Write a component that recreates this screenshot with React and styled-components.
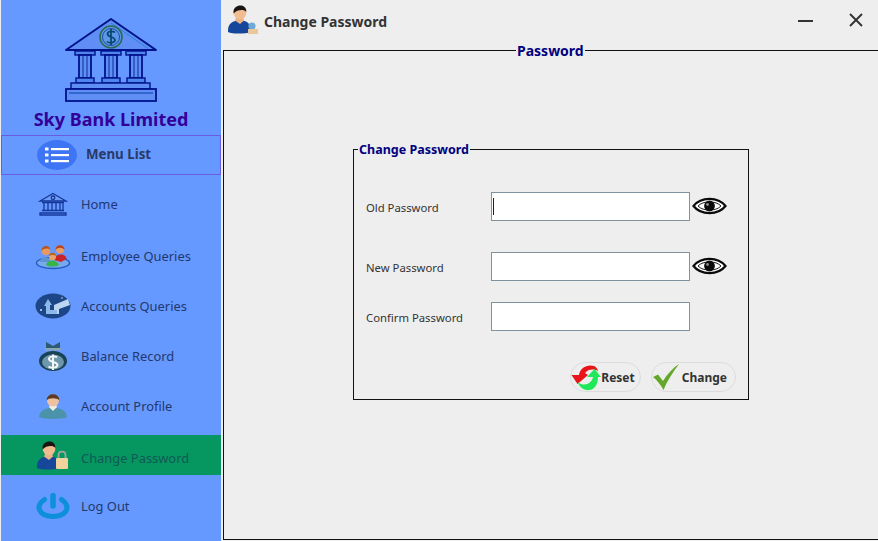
import React from 'react';
import styled, { createGlobalStyle } from 'styled-components';

const Global = createGlobalStyle`
  html, body { margin: 0; padding: 0; width: 878px; height: 541px; overflow: hidden; background: #eeeeee; }
  * { box-sizing: border-box; }
`;
const FONT = `"Noto Sans", "Open Sans", "Liberation Sans", sans-serif`;

const Page = styled.div`
  width: 878px; height: 541px; display: flex; background: #eeeeee; font-family: ${FONT}; overflow: hidden;
`;
const Sidebar = styled.aside`
  width: 220px; height: 541px; margin-left: 1px; background: #6699ff; flex: none;
  display: flex; flex-direction: column; align-items: stretch;
`;
const Brand = styled.div`
  height: 135px; display: flex; flex-direction: column; align-items: center; padding-top: 17px;
`;
const BrandName = styled.h1`
  margin: 4px 0 0; font-size: 18px; line-height: 24px; font-weight: 700; color: #330099; white-space: nowrap;
`;
const MenuHeader = styled.div`
  height: 40px; display: flex; align-items: center; padding-left: 35px; border: 1px solid #6a5ce0;
`;
const MenuBadge = styled.span`
  width: 40px; height: 30px; border-radius: 50%; background: #3d75f5; display: flex; align-items: center; justify-content: center;
`;
const MenuTitle = styled.span`
  margin: -2px 0 0 9px; font-size: 13.3px; font-weight: 700; color: #283a66;
`;
const Nav = styled.nav`display: flex; flex-direction: column;`;
const NavItem = styled.div`
  height: 40px; margin-top: ${p => p.$top}px; display: flex; align-items: center; padding-left: 34px;
  background: ${p => (p.$active ? '#069660' : 'transparent')};
  color: ${p => (p.$active ? '#0f5a55' : '#22386f')};
`;
const NavIcon = styled.span`
  width: 36px; height: 32px; flex: none; display: flex; align-items: center; justify-content: center;
`;
const NavLabel = styled.span`
  margin: -1px 0 0 10px; font-size: 12.9px; white-space: nowrap; padding-top: ${p => p.$drop}px;
`;
const Main = styled.main`
  flex: 1; min-width: 0; padding-left: 2px; display: flex; flex-direction: column;
`;
const TitleBar = styled.header`
  height: 42px; display: flex; align-items: center; padding-left: 5px; flex: none;
`;
const TitleIcon = styled.span`display: flex; margin-top: -4px;`;
const TitleText = styled.span`
  margin: 0 0 0 4px; font-size: 14px; font-weight: 700; color: #333333; white-space: nowrap;
`;
const WindowButtons = styled.div`
  margin-left: auto; display: flex; align-items: center; gap: 36px; padding-right: 15px; margin-top: -2px;
`;
const Outer = styled.fieldset`
  margin: 0; width: 657px; height: 498px; border: 1px solid #111111; padding: 0; min-width: 0;
`;
const OuterLegend = styled.legend`
  margin: 0 0 0 292px; padding: 2px 1px 0; font-size: 14px; line-height: 14px; font-weight: 700; color: #000080;
`;
const Canvas = styled.div`padding: 83px 0 0 129px;`;
const Inner = styled.fieldset`
  margin: 0; width: 396px; height: 259px; border: 1px solid #111111; padding: 0; min-width: 0;
`;
const InnerLegend = styled.legend`
  margin: 0 0 0 4px; padding: 2px 1px 0; font-size: 12.5px; line-height: 14px; font-weight: 700; color: #000080;
`;
const Form = styled.div`padding-left: 12px;`;
const Row = styled.div`
  display: flex; align-items: center; height: 29px; margin-top: ${p => p.$top}px;
`;
const Label = styled.label`
  width: 125px; flex: none; font-size: 11.3px; color: #333333; white-space: nowrap; padding-top: 1px;
`;
const Field = styled.input`
  width: 199px; height: 29px; flex: none; background: #ffffff; border: 1px solid #7f929f; padding: 0 2px; outline: none; font: inherit; display: block;
`;
const Caret = styled.span`
  position: absolute; left: 2px; top: 6px; width: 1px; height: 17px; background: #222222;
`;
const FieldWrap = styled.span`position: relative; display: block; height: 29px;`;
const Eye = styled.span`margin: -2px 0 0 2px; display: flex;`;
const Actions = styled.div`
  display: flex; justify-content: flex-end; gap: 10px; margin-top: 31px; padding-right: 12px;
`;
const Pill = styled.button`
  height: 30px; display: flex; align-items: center; gap: ${p => p.$gap}px; padding: 0 ${p => p.$right}px 0 0;
  background: #eeeeee; border: 1px solid #dcdcdc; border-radius: 15px; font-family: ${FONT}; font-size: 12px; font-weight: 700; color: #333333;
`;

const Temple = () => (
  <svg width="94" height="86" viewBox="0 0 94 86">
    <path d="M47 2 L92 33 H2 Z" fill="#5f8ff5" stroke="#00128c" strokeWidth="2" strokeLinejoin="round" />
    <path d="M47 6 L84 31.5" stroke="#1d7fc0" strokeWidth="0.8" fill="none" />
    <circle cx="47" cy="20" r="11" fill="#5f97e8" stroke="#2a6a55" strokeWidth="1.6" />
    <circle cx="47" cy="20" r="8.5" fill="none" stroke="#0d3a90" strokeWidth="0.8" />
    <path d="M51 15.5 C49 13.5 43.5 14 43.5 17 C43.5 20.5 51 19.5 51 23 C51 26 45 26.5 43 24.5 M47 12 V28" fill="none" stroke="#07456f" strokeWidth="1.7" />
    {[11, 37, 62].map(x => (
      <g key={x}>
        <rect x={x} y="34" width="20" height="4" fill="#4f86ee" stroke="#00128c" strokeWidth="1.4" />
        <rect x={x + 4} y="38" width="12" height="23" fill="#5f8ff5" stroke="#00128c" strokeWidth="1.8" />
        <path d={`M${x + 8} 39 V60 M${x + 12} 39 V60`} stroke="#0d2e98" strokeWidth="1" />
        <rect x={x + 1} y="61" width="18" height="5" fill="#4f86ee" stroke="#00128c" strokeWidth="1.4" />
      </g>
    ))}
    <rect x="7" y="66" width="79" height="6" fill="#5f8ff5" stroke="#00128c" strokeWidth="1.4" />
    <rect x="2" y="72" width="90" height="12" fill="#5f8ff5" stroke="#00128c" strokeWidth="1.8" />
    <path d="M5 76 H89" stroke="#0b3ea8" strokeWidth="1" />
  </svg>
);

const ListGlyph = () => (
  <svg width="24" height="16" viewBox="0 0 24 16">
    {[2, 8, 14].map(y => (
      <g key={y} fill="#ffffff">
        <rect x="0" y={y - 1.5} width="3.5" height="3" />
        <rect x="6" y={y - 1} width="18" height="2.2" />
      </g>
    ))}
  </svg>
);

const HomeIcon = () => (
  <svg width="30" height="24" viewBox="0 0 30 24" fill="none" stroke="#14379a" strokeWidth="1.3">
    <path d="M15 1.5 L28 9 H2 Z" fill="#6f9cf2" />
    <circle cx="15" cy="5.8" r="1.8" />
    <path d="M4 10.5 H26 M6 11 V18 M10 11 V18 M14 11 V18 M18 11 V18 M22 11 V18 M25 11 V18 M4 18.5 H26" />
    <path d="M2 21 H28 V23 H2 Z" />
  </svg>
);
const PeopleIcon = () => (
  <svg width="36" height="28" viewBox="0 0 36 28">
    <ellipse cx="18" cy="21" rx="16.5" ry="5.5" fill="#7aa8ee" stroke="#1d5cc0" strokeWidth="1.4" />
    <path d="M5 20 C5 14 15 13 15 20 Z" fill="#5f93ce" />
    <circle cx="11" cy="9" r="4.3" fill="#e89a5e" />
    <path d="M6.5 9 C6 3 15 2 15.5 8 C13 6 9 6 6.5 9Z" fill="#b8561f" />
    <path d="M19 18 C20 11 31 11 31.5 17 L26 20 Z" fill="#c9242a" />
    <circle cx="25" cy="7.5" r="4" fill="#ea9e64" />
    <path d="M20.5 8 C20 1.5 30 1.5 29.5 8 C27 5 23 5 20.5 8Z" fill="#b8461f" />
    <path d="M11 23 C12 17 22 17 24 23 C20 25 14 25 11 23Z" fill="#37b548" />
    <circle cx="17.5" cy="14.5" r="3.6" fill="#eba468" />
    <path d="M13.7 14 C14 9.5 21 9.5 21.3 14 C19 12.5 16 12.5 13.7 14Z" fill="#b5651d" />
  </svg>
);
const AccountsIcon = () => (
  <svg width="36" height="26" viewBox="0 0 36 26">
    <ellipse cx="18" cy="13" rx="17.5" ry="12.5" fill="#1c4688" />
    <path d="M19 12 L33 6 L35 12 L24 16 L24 21 L19 21 Z" fill="#bcd6f2" />
    <path d="M9 13 L13 6 L17 12 L15 12 L15 17 L22 17 L22 21 L11 21 L11 13 Z" fill="#8db8ea" />
    <circle cx="6" cy="17" r="1" fill="#cfe2fa" />
    <circle cx="27" cy="5" r="0.8" fill="#cfe2fa" />
  </svg>
);
const BagIcon = () => (
  <svg width="32" height="30" viewBox="0 0 32 30">
    <ellipse cx="16" cy="20" rx="14" ry="10" fill="#1a4257" />
    <ellipse cx="16" cy="21" rx="11" ry="7.5" fill="#6d97ab" />
    <path d="M9 1 L16 5 L23 1 L23 7 C21 10 11 10 9 7 Z" fill="#2e5a70" />
    <rect x="8" y="7" width="16" height="2.5" rx="1" fill="#8aa7b5" />
    <path d="M20 16.5 C18 14.5 12 15 12 18 C12 21.5 20.5 20.5 20.5 24 C20.5 27 14 27.5 11.5 25.5 M16 13.5 V29" fill="none" stroke="#f3f6f7" strokeWidth="2" />
  </svg>
);
const ProfileIcon = () => (
  <svg width="30" height="26" viewBox="0 0 30 26">
    <path d="M1 24 C2 16 9 15 15 15 C21 15 28 16 29 24 C24 26.5 6 26.5 1 24Z" fill="#4a93a8" />
    <path d="M11 14 L15 18 L19 14 L18 11 H12 Z" fill="#f1efe6" />
    <circle cx="15" cy="7.5" r="6" fill="#eec1a1" />
    <path d="M8.8 7.5 C8 -1 22 -1 21.2 7.5 C20 4.5 10 4.5 8.8 7.5Z" fill="#5d3b22" />
  </svg>
);
const LockUserIcon = ({ blur }) => (
  <svg width="32" height="29" viewBox="0 0 32 29">
    <path d="M0 27 C-0.5 18 5 15.5 12 15.5 C19 15.5 23 18 23 27 C17 29 4 29 0 27Z" fill="#17479a" />
    <path d="M7 15.5 L12 19 L16 15.5 L15 12 H8.5 Z" fill="#eab184" />
    <circle cx="12" cy="8" r="6.3" fill="#f0bc90" />
    <path d="M5.6 8.5 C4 -1.5 19 -2.5 18.3 7 C16 4 9 4.5 5.6 8.5Z" fill="#1a1512" />
    {blur ? (
      <>
        <circle cx="24" cy="21" r="3.6" fill="#6fa9d8" />
        <path d="M20 24 H30 V29 H20 Z" fill="#e8c79b" />
      </>
    ) : (
      <>
        <path d="M21.5 17 V14 C21.5 9.5 28.5 9.5 28.5 14 V17" fill="none" stroke="#9fa6a0" strokeWidth="1.8" />
        <rect x="19" y="17" width="12" height="11" rx="1" fill="#efd29c" />
      </>
    )}
  </svg>
);
const PowerIcon = () => (
  <svg width="36" height="26" viewBox="0 0 36 26" fill="none" stroke="#0d8fdc">
    <path d="M9.5 6.5 C-1 14 5 23.5 18 23.5 C31 23.5 37 14 26.5 6.5" strokeWidth="5" strokeLinecap="round" />
    <path d="M18 2.5 V13" strokeWidth="5.5" strokeLinecap="round" />
  </svg>
);
const EyeIcon = () => (
  <svg width="35" height="18" viewBox="0 0 35 18">
    <path d="M1.5 9 C9 -0.5 26 -0.5 33.5 9 C26 18.5 9 18.5 1.5 9Z" fill="#ffffff" stroke="#0a0a0a" strokeWidth="2.2" />
    <path d="M6 9 C11 3.5 24 3.5 29 9 C24 14.5 11 14.5 6 9Z" fill="none" stroke="#0a0a0a" strokeWidth="0.9" />
    <circle cx="17.5" cy="9" r="5.4" fill="#0a0a0a" />
    <circle cx="15.5" cy="7.5" r="1.4" fill="#8c8c8c" />
  </svg>
);
const ResetIcon = () => (
  <svg width="30" height="30" viewBox="0 0 30 30">
    <path d="M8 13 C9 6 16 2 23 4 C25 5 26.5 6.5 27 9 C23 6.5 17 7 14 11 L17 13 L6.5 22 L0.5 13 Z" fill="#e8141a" />
    <path d="M22 15 C21 20 16 24 10 22 C8.5 21.5 8 21 7 20 C8 25 13 29 19 28 C24 27 27 22 27 15 L30 15 L23.5 7 L16 15 Z" fill="#1fe85a" />
  </svg>
);
const CheckIcon = () => (
  <svg width="28" height="28" viewBox="0 0 28 28">
    <path d="M1 14 L6 11.5 L11 18 C15 11 21 5 27 1 C21 9 15 18 11.5 27 C8 21 5 17 1 14Z" fill="#63a82a" />
  </svg>
);

const items = [
  { label: 'Home', icon: <HomeIcon />, top: 9 },
  { label: 'Employee Queries', icon: <PeopleIcon />, top: 12 },
  { label: 'Accounts Queries', icon: <AccountsIcon />, top: 10 },
  { label: 'Balance Record', icon: <BagIcon />, top: 10 },
  { label: 'Account Profile', icon: <ProfileIcon />, top: 10 },
  { label: 'Change Password', icon: <LockUserIcon />, top: 9, active: true, drop: 6 },
  { label: 'Log Out', icon: <PowerIcon />, top: 11 },
];

export default function App() {
  return (
    <Page>
      <Global />
      <Sidebar>
        <Brand>
          <Temple />
          <BrandName>Sky Bank Limited</BrandName>
        </Brand>
        <MenuHeader>
          <MenuBadge><ListGlyph /></MenuBadge>
          <MenuTitle>Menu List</MenuTitle>
        </MenuHeader>
        <Nav>
          {items.map(i => (
            <NavItem key={i.label} $top={i.top} $active={i.active}>
              <NavIcon>{i.icon}</NavIcon>
              <NavLabel $drop={i.drop || 0}>{i.label}</NavLabel>
            </NavItem>
          ))}
        </Nav>
      </Sidebar>
      <Main>
        <TitleBar>
          <TitleIcon><LockUserIcon blur /></TitleIcon>
          <TitleText>Change Password</TitleText>
          <WindowButtons>
            <svg width="15" height="12" viewBox="0 0 15 12"><path d="M0 7 H15" stroke="#333" strokeWidth="2" /></svg>
            <svg width="14" height="14" viewBox="0 0 14 14"><path d="M1 1 L13 13 M13 1 L1 13" stroke="#333" strokeWidth="1.9" /></svg>
          </WindowButtons>
        </TitleBar>
        <Outer>
          <OuterLegend>Password</OuterLegend>
          <Canvas>
            <Inner>
              <InnerLegend>Change Password</InnerLegend>
              <Form>
                <Row $top={35}>
                  <Label>Old Password</Label>
                  <FieldWrap><Field type="password" /><Caret /></FieldWrap>
                  <Eye><EyeIcon /></Eye>
                </Row>
                <Row $top={31}>
                  <Label>New Password</Label>
                  <Field type="password" />
                  <Eye><EyeIcon /></Eye>
                </Row>
                <Row $top={21}>
                  <Label>Confirm Password</Label>
                  <Field type="password" />
                </Row>
                <Actions>
                  <Pill $gap={0} $right={5}><ResetIcon />Reset</Pill>
                  <Pill $gap={2} $right={8}><CheckIcon />Change</Pill>
                </Actions>
              </Form>
            </Inner>
          </Canvas>
        </Outer>
      </Main>
    </Page>
  );
}
